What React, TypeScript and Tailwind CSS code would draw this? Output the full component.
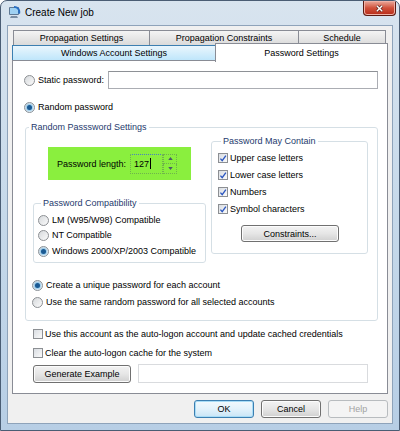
import type { ReactNode } from 'react';

function Radio({ checked = false }: { checked?: boolean }) {
  return (
    <span className="flex h-[11px] w-[11px] shrink-0 items-center justify-center rounded-full border border-[#8c8f93] bg-linear-to-br from-[#d6d9dc] to-[#fbfbfb]">
      {checked && <span className="h-[5px] w-[5px] rounded-full bg-[#1b5a93] shadow-[0_0_2px_1px_#7cc0ec]" />}
    </span>
  );
}

function Check({ checked = false }: { checked?: boolean }) {
  return (
    <span className="flex h-[10px] w-[10px] shrink-0 items-center justify-center border border-[#8c8f93] bg-linear-to-br from-[#d9dde2] to-[#fafafa]">
      {checked && (
        <svg viewBox="0 0 10 10" className="h-[9px] w-[9px]">
          <path d="M1.8 5.2 L4 7.8 L8.6 1.4" stroke="#2c57c0" strokeWidth="1.7" fill="none" />
        </svg>
      )}
    </span>
  );
}

function RadioRow({ checked, children, className = '' }: { checked?: boolean; children: ReactNode; className?: string }) {
  return (
    <div className={`flex h-[12px] items-center ${className}`}>
      <Radio checked={checked} />
      <span className="ml-[3px] whitespace-nowrap">{children}</span>
    </div>
  );
}

function CheckRow({ checked, children, className = '' }: { checked?: boolean; children: ReactNode; className?: string }) {
  return (
    <div className={`flex h-[12px] items-center ${className}`}>
      <Check checked={checked} />
      <span className="ml-[2px] whitespace-nowrap">{children}</span>
    </div>
  );
}

function Button({ children, className = '', variant = 'normal' }: { children: ReactNode; className?: string; variant?: 'normal' | 'default' | 'disabled' }) {
  const look =
    variant === 'default'
      ? 'border-[#3c7fb1] bg-linear-to-b from-[#f2f9fd] via-[#e3f2fb] to-[#c9e5f6] shadow-[inset_0_0_0_1px_#a8dcf6]'
      : variant === 'disabled'
        ? 'border-[#b8bcbf] bg-[#f4f4f4] text-[#a3a3a3]'
        : 'border-[#707070] bg-linear-to-b from-[#f3f3f3] via-[#e6e6e6] to-[#d0d0d0] shadow-[inset_0_0_0_1px_#fcfcfc]';
  return (
    <div className={`flex items-center justify-center rounded-[3px] border ${look} ${className}`}>{children}</div>
  );
}

function Group({ title, className = '', children }: { title: string; className?: string; children: ReactNode }) {
  return (
    <fieldset className={`rounded-[3px] border border-[#d5dfe5] ${className}`}>
      <legend className="ml-[3px] px-[2px] leading-[12px] text-[#1e3a6d]">{title}</legend>
      {children}
    </fieldset>
  );
}

function BackTab({ children, className = '' }: { children: ReactNode; className?: string }) {
  return (
    <div className={`-ml-[1px] flex h-[16px] items-center justify-center border border-[#898c95] bg-linear-to-b from-[#f4f4f4] to-[#dadada] first:ml-0 ${className}`}>
      {children}
    </div>
  );
}

function JobIcon() {
  return (
    <svg viewBox="0 0 14 14" className="h-[14px] w-[14px]">
      <rect x="1" y="2" width="10" height="8" rx="1" fill="#5e7894" />
      <rect x="2" y="3" width="8" height="6" fill="#9fd1f2" />
      <path d="M3 11 L9 11 L10 13 L2 13 Z" fill="#7a8ea4" />
      <path d="M6 1 C11 1 13 5 12 9 L10 8 C11 5 9 3 6 3 Z" fill="#2a6fc2" />
    </svg>
  );
}

export default function App() {
  return (
    <div className="flex h-[431px] w-[400px] flex-col overflow-hidden rounded-t-[7px] border border-[#4a5d74] bg-linear-to-b from-[#d8e4ef] via-[#c6d9ea] to-[#b7cee5] font-['Liberation_Sans',Arial,sans-serif] text-[9px] leading-[12px] text-black">
      {/* Title bar */}
      <div className="flex h-[24px] shrink-0 items-start pl-[7px] pr-[3px]">
        <div className="mt-[4px]">
          <JobIcon />
        </div>
        <span className="ml-[3px] mt-[5px] text-[10px] leading-[14px] text-black">Create New job</span>
        <div className="ml-auto flex h-[15px] w-[33px] items-center justify-center rounded-b-[4px] border border-t-0 border-[#5b1a12] bg-linear-to-b from-[#e9a99c] via-[#d0503a] to-[#b62a17] shadow-[inset_0_0_0_1px_#f0b2a6]">
          <svg viewBox="0 0 10 10" className="h-[9px] w-[9px]">
            <path d="M2 2 L8 8 M8 2 L2 8" stroke="#5a1f18" strokeWidth="3" />
            <path d="M2 2 L8 8 M8 2 L2 8" stroke="#ffffff" strokeWidth="1.6" />
          </svg>
        </div>
      </div>

      {/* Client area */}
      <div className="mx-[6px] mb-[6px] flex flex-1 flex-col border border-[#8ea3ba] bg-[#f0f0f0] px-[4px] pt-[4px]">
        {/* Tabs */}
        <div className="ml-[1px] flex">
          <BackTab className="w-[137px]">Propagation Settings</BackTab>
          <BackTab className="w-[150px]">Propagation Constraints</BackTab>
          <BackTab className="w-[88px]">Schedule</BackTab>
        </div>
        <div className="-mt-[1px] flex h-[16px] items-start">
          <div className="flex h-[16px] w-[204px] items-center justify-center border border-[#3c7fb1] bg-linear-to-b from-[#eaf6fd] to-[#bfe6fb]">
            Windows Account Settings
          </div>
          <div className="relative z-10 -ml-[1px] -mt-[2px] flex h-[19px] w-[173px] items-start justify-center border border-b-0 border-[#898c95] bg-white pt-[3px]">
            Password Settings
          </div>
        </div>

        {/* Tab page */}
        <div className="-mt-[1px] flex h-[334px] flex-col border border-[#898c95] bg-white pl-[11px] pt-[10px]">
          <div className="flex h-[18px] items-center">
            <Radio />
            <span className="ml-[3px] w-[69px] whitespace-nowrap">Static password:</span>
            <div className="ml-[1px] h-[18px] w-[270px] border border-[#abadb3] border-t-[#8e9196] bg-white" />
          </div>
          <RadioRow checked className="mt-[12px]">Random password</RadioRow>

          <Group title="Random Passsword Settings" className="ml-[1px] mt-[8px] w-[353px] pb-[12px]">
            <div className="flex">
              <div className="ml-[7px] flex w-[173px] flex-col">
                <div className="ml-[15px] mt-[14px] flex h-[33px] w-[143px] items-center bg-[#8aef3e] pl-[9px]">
                  <span className="whitespace-nowrap">Password length:</span>
                  <div className="ml-[4px] flex h-[20px] items-stretch">
                    <div className="flex w-[33px] items-center border border-dotted border-[#6fb44a] border-t-solid border-t-[#4a7fc0] pl-[3px]">
                      <span>127</span>
                      <span className="ml-[1px] h-[11px] w-[1px] bg-black" />
                    </div>
                    <div className="flex w-[14px] flex-col">
                      <div className="flex flex-1 items-center justify-center border border-dotted border-[#6fb44a]">
                        <svg viewBox="0 0 6 4" className="h-[3px] w-[5px]"><path d="M0 4 L3 0 L6 4 Z" fill="#4a5a6a" /></svg>
                      </div>
                      <div className="flex flex-1 items-center justify-center border border-t-0 border-dotted border-[#6fb44a]">
                        <svg viewBox="0 0 6 4" className="h-[3px] w-[5px]"><path d="M0 0 L6 0 L3 4 Z" fill="#4a5a6a" /></svg>
                      </div>
                    </div>
                  </div>
                </div>

                <Group title="Password Compatibility" className="mt-[17px] w-[173px] pb-[5px] pl-[4px]">
                  <RadioRow className="mt-[5px]">LM (W95/W98) Compatible</RadioRow>
                  <RadioRow className="mt-[3px]">NT Compatible</RadioRow>
                  <RadioRow checked className="mt-[4px]">Windows 2000/XP/2003 Compatible</RadioRow>
                </Group>
              </div>

              <Group title="Password May Contain" className="ml-[5px] mt-[2px] w-[157px] self-start pb-[11px] pl-[6px]">
                <CheckRow checked className="mt-[5px]">Upper case letters</CheckRow>
                <CheckRow checked className="mt-[5px]">Lower case letters</CheckRow>
                <CheckRow checked className="mt-[5px]">Numbers</CheckRow>
                <CheckRow checked className="mt-[5px]">Symbol characters</CheckRow>
                <Button className="ml-[23px] mt-[10px] h-[17px] w-[98px]">Constraints...</Button>
              </Group>
            </div>

            <div className="pl-[6px]">
              <RadioRow checked className="mt-[16px]">Create a unique password for each account</RadioRow>
              <RadioRow className="mt-[5px]">Use the same random password for all selected accounts</RadioRow>
            </div>
          </Group>

          <div className="pl-[9px]">
            <CheckRow className="mt-[7px]">Use this account as the auto-logon account and update cached credentials</CheckRow>
            <CheckRow className="mt-[7px]">Clear the auto-logon cache for the system</CheckRow>
            <div className="mt-[5px] flex items-center">
              <Button className="h-[18px] w-[98px]">Generate Example</Button>
              <div className="ml-[7px] h-[19px] w-[230px] border border-[#d9dbde] bg-white" />
            </div>
          </div>
        </div>

        {/* Dialog buttons */}
        <div className="mt-[6px] flex justify-end gap-[7px]">
          <Button variant="default" className="h-[18px] w-[60px]">OK</Button>
          <Button className="h-[18px] w-[60px]">Cancel</Button>
          <Button variant="disabled" className="h-[18px] w-[60px]">Help</Button>
        </div>
      </div>
    </div>
  );
}
